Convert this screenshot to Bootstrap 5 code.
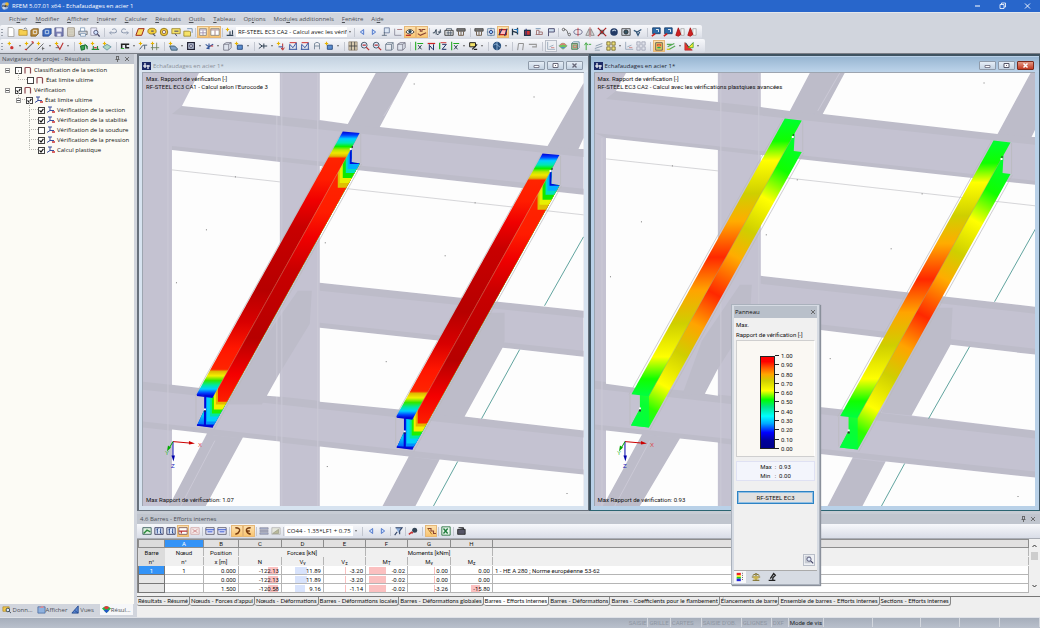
<!DOCTYPE html>
<html lang="fr">
<head>
<meta charset="utf-8">
<meta name="viewport" content="width=device-width, initial-scale=1">
<title>RFEM 5.07.01 x64 - Echafaudages en acier 1</title>
<link href="https://cdn.jsdelivr.net/npm/bootstrap@5.3.0/dist/css/bootstrap.min.css" rel="stylesheet">
<style>
  :root { --ui: "Open Sans", "Noto Sans", sans-serif; --grid: Roboto, "Liberation Sans", sans-serif; }
  body { font: 6px/8px var(--ui); color: #222; background: #d1d5dd; height: 100vh; }
  button, input, select { font: inherit; color: inherit; border: 0; padding: 0; background: none; }
  a, a:hover { color: inherit; text-decoration: none; }
  svg { display: block; }
  .titlebar { height: 12px; background: #2866cb; color: #fff; }
  .winctl { width: 25px; height: 12px; }
  .menubar { height: 13px; border-top: 1px solid #e4e7ec; color: #4c4f55; padding-left: 5px; }
  .menubar a { padding: 0 4px; }
  .toolrow { height: 14px; width: max-content; border-radius: 2px; background: linear-gradient(#f7f8fb, #dfe2ea 80%, #d3d7e0); padding-right: 4px; }
  .grip { width: 5px; height: 9px; background: radial-gradient(circle at 50% 50%, #9aa0aa 30%, transparent 40%) 1px 0/2px 3px repeat-y; }
  .ic { width: 12px; height: 12px; flex: none; }
  .ic svg { width: 10px; height: 10px; margin: auto; }
  .ic.on { background: linear-gradient(#fde3b4, #f9c26a); box-shadow: inset 0 0 0 1px #e6b878; }
  .ic.pressed { background: #eef0f4; box-shadow: inset 0 0 0 1px #b9bec8; }
  .dd { width: 6px; height: 12px; flex: none; }
  .dd::after { content: ""; display: block; width: 0; margin: auto; border: 2px solid transparent; border-top-color: #666; border-bottom: 0; border-left-width: 1px; border-right-width: 1px; }
  .gap-a { width: 3px; flex: none; } .gap-b { width: 6px; flex: none; }
  .gap-a::after, .gap-b::after { content: ""; display: block; width: 1px; height: 9px; margin: auto; background: #c3c7d0; }
  .combo { height: 10px; background: #fff; color: #111; padding-left: 2px; appearance: none; overflow: hidden; }
  .workspace { min-height: 0; border-top: 1px solid #7b7f87; gap: 3px; }
  .navi { width: 134px; flex: none; }
  .panehead { height: 10px; background: #c0c5ce; color: #4a4e55; padding: 0 3px; }
  .navi .panehead { padding-left: 2px; }
  .tree { background: #fcfbf5; padding: 1px 0 0 5px; color: #111; }
  .tree ul { list-style: none; margin: 0; padding: 0 0 0 11px; }
  .tree > ul { padding: 0; }
  .tree li { position: relative; }
  .tree label { height: 10px; position: relative; }
  .tree label.leaf { padding-left: 11px; }
  .tree li li::before { content: ""; position: absolute; left: 2px; top: -5px; width: 9px; height: 10px; border: dotted #b6b6b0; border-width: 0 0 1px 1px; }
  .tree .exp { width: 5px; height: 5px; border: 1px solid #9a9a9a; background: #fff linear-gradient(#555, #555) center/3px 1px no-repeat; margin-right: 5px; }
  .tree input { appearance: none; width: 7px; height: 7px; border: 1px solid #444; background: #fff; margin: 0 1px 0 0; flex: none; }
  .tree input:checked { background: #fff url("data:image/svg+xml,%3Csvg xmlns='http://www.w3.org/2000/svg' viewBox='0 0 5 5'%3E%3Cpath d='M.6 2.3 2 4 4.4.8' fill='none' stroke='%23111' stroke-width='1.1'/%3E%3C/svg%3E") center/5px 5px no-repeat; }
  .tree svg { width: 9px; height: 8px; margin-right: 2px; flex: none; }
  .navtabs { height: 13px; color: #4a4e55; }
  .navtabs a { padding: 0 2px; height: 11px; }
  .navtabs a.cur { background: #f6f7f9; }
  .navtabs svg { width: 9px; height: 9px; }
  .mdi { min-height: 0; min-width: 0; background: #c7ccd4; }
  .docs { min-height: 0; }
  .doc { border: 1px solid #68717c; border-width: 2px 1px 1px 2px; background: #d7e3f0; padding: 1px 4px 4px 3px; min-width: 0; }
  .doc.act { background: #b9d1e8; border-color: #3f5361; border-bottom-color: #2b6572; }
  .dochead { height: 15px; color: #8a8f97; background: linear-gradient(#c3d2e0, #dde7f1); margin: 0 -4px 0 -3px; padding: 2px 5px 0 3px; }
  .act .dochead { color: #1d2530; background: linear-gradient(#98b6d2, #bdd4ea); }
  .dochead > svg { margin-right: 2px; }
  .wb { width: 17px; height: 9px; border: 1px solid #8f9baa; border-radius: 1px; background: linear-gradient(#e6eef6, #c3d2e2); margin-left: 2px; }
  .wb svg { width: 7px; height: 7px; margin: auto; }
  .act .wb.red { background: linear-gradient(#e39a86, #c23a22); border-color: #7d2a1c; }
  .view { position: relative; background: #fdfdfd; border: 1px solid #9da5b0; border-width: 1px 0 0 1px; overflow: hidden; min-height: 0; font: 6px/8px var(--grid); color: #111; }
  .view > svg { position: absolute; inset: 0; width: 100%; height: 100%; }
  .cap { position: absolute; left: 3px; top: 2px; } .foot { position: absolute; left: 3px; bottom: 2px; }
  .tables { border-top: 3px solid #c7ccd4; background: #efefef; padding-bottom: 9px; }
  .tabletools { height: 15px; background: linear-gradient(#f7f8fb, #d9dde7); padding-left: 4px; border-bottom: 1px solid #a8acb4; }
  .gridwrap { border-left: 1px solid #888; min-width: 0; }
  .grid { table-layout: fixed; width: 100%; border-collapse: collapse; font: 6px/7px var(--grid); color: #111; background: #fff; }
  .grid th, .grid td { padding: 0 2px; border: 1px solid #b5b5b5; white-space: nowrap; overflow: hidden; font-weight: 400; height: 9px; line-height: 7px; }
  .grid thead th { background: #f0f0f0; text-align: center; border-top-color: #f0f0f0; border-bottom-color: #f0f0f0; }
  .grid thead tr.lt th { background: #e2e1e1; border: 1px solid #8d8d8d; height: 8px; }
  .grid thead tr.lt th.sel, .grid tbody th.sel { background: #3393f7; color: #fff; }
  .grid thead th.bn { background: #dcdcdc !important; border-color: #dcdcdc; }
  .grid tbody th { background: #e6e6e6; text-align: center; border-color: #777; }
  .grid tbody td { text-align: right; }
  .grid sub { font-size: 5px; bottom: -1px; line-height: 1px; }
  .b-r, .b-b { background: linear-gradient(var(--c), var(--c)) no-repeat; background-size: var(--w) 7px; background-position: var(--x) 1px; }
  .b-r { --c: #fbc0c0; } .b-b { --c: #d8e3fc; }
  .vscroll { width: 11px; background: #f0f0f0; flex: none; }
  .sheets { font: 6px/8px Lato, var(--grid); color: #111; border-top: 1px solid #777; margin-top: 3px; height: 12px; }
  .sheets a { height: 9px; padding: 0 1px; border: 1px solid #888; border-width: 0 1px 1px 0; border-radius: 0 0 3px 2px; background: #eaeaea; white-space: nowrap; }
  .sheets a.cur { background: #fff; }
  .status { height: 11px; background: linear-gradient(#a6aebb, #b9c0cc); border-top: 1px solid #dfe2e8; color: #8e96a2; font: 6px/9px var(--grid); }
  .status span { border-right: 1px solid #d3d7de; padding: 0 1px; height: 9px; white-space: nowrap; }
  .float-panel { position: absolute; right: 220px; top: 304px; width: 89px; background: #d6dbe3; border: 1px solid #aab1bc; box-shadow: 1px 1px 1px #8a909b; padding: 1px 2px; color: #111; z-index: 5; font: 6px/8px var(--grid); }
  .float-panel .hd { height: 12px; background: #b9c0ca; padding: 0 1px; font-family: var(--ui); }
  .float-panel .bd { background: #f0f0f0; border-bottom: 1px solid #aaa; padding: 2px 2px 0; }
  .what { line-height: 10px; }
  .scale { height: 117px; background: #faf8f3; border: 1px solid #cfcfcf; border-right-color: #fff; padding-top: 10px; }
  .ramp { width: 15px; height: 93px; margin: 5px 0 0 23px; border: 1px solid #222; background: linear-gradient(#f00 5%, #ff5a00 12%, #ffa500 19%, #cfcf00 26%, #ff0 37%, #0f0 47%, #00e68a 55%, #0ff 65%, #0af 73%, #00f 83%, #00009a 92%, #00008b); }
  .marks { height: 102px; }
  .marks span { line-height: 9px; padding-left: 6px; background: linear-gradient(#222, #222) 0 50%/4px 1px no-repeat; }
  .minmax { background: #f3f5fc; border: 1px solid #dfe1f3; height: 20px; margin-top: 4px; white-space: pre; line-height: 9px; }
  .modbtn { height: 13px; background: #e1e1e1; border: 1px solid #2e83c4; outline: 1px solid #8fbfe4; outline-offset: -2px; margin: 10px 1px 50px; }
</style>
</head>
<body class="d-flex flex-column overflow-hidden position-relative">

<header class="flex-shrink-0">
  <div class="titlebar d-flex align-items-center">
    <svg width="12" height="10" viewBox="0 0 12 10"><circle cx="5" cy="5" r="3.4" fill="#9fb4d8"/><path d="M3 8 8 2M2 5h6" stroke="#333" stroke-width="1.2"/><circle cx="7" cy="3" r="1.8" fill="#e9b93a"/><circle cx="4" cy="7" r="1.5" fill="#c7d4e8"/></svg>
    <span class="flex-grow-1">RFEM 5.07.01 x64 - Echafaudages en acier 1</span>
    <button class="winctl" aria-label="Réduire"><svg width="25" height="12" viewBox="0 0 25 12"><path d="M10 6h5" stroke="#fff"/></svg></button>
    <button class="winctl" aria-label="Restaurer"><svg width="25" height="12" viewBox="0 0 25 12"><path d="M10 4.500h4v4h-4zM11.500 4.500v-1.500h4v4h-1.500" stroke="#fff" stroke-width=".8" fill="none"/></svg></button>
    <button class="winctl" aria-label="Fermer"><svg width="25" height="12" viewBox="0 0 25 12"><path d="M10 3.500l5 5m0-5l-5 5" stroke="#fff" stroke-width=".9"/></svg></button>
  </div>
  <nav class="menubar d-flex align-items-center">
    <a href="#">Fic<u>h</u>ier</a><a href="#"><u>M</u>odifier</a><a href="#"><u>A</u>fficher</a><a href="#"><u>I</u>nsérer</a><a href="#"><u>C</u>alculer</a><a href="#"><u>R</u>ésultats</a><a href="#"><u>O</u>utils</a><a href="#"><u>T</u>ableau</a><a href="#">Op<u>t</u>ions</a><a href="#">Mod<u>u</u>les additionnels</a><a href="#"><u>F</u>enêtre</a><a href="#">Ai<u>d</u>e</a>
  </nav>
  <div class="toolrow d-flex align-items-center" id="bar1"></div>
  <div class="toolrow d-flex align-items-center" id="bar2"></div>
</header>

<main class="workspace flex-grow-1 d-flex">
  <aside class="navi d-flex flex-column">
    <div class="panehead d-flex align-items-center"><span class="flex-grow-1">Navigateur de projet - Résultats</span>
      <svg width="18" height="8" viewBox="0 0 18 8" fill="none" stroke="#555" stroke-width=".8"><path d="M3 1.500h3M3.500 1.500v3M5.500 1.500v3M2.500 4.500h4M4.500 4.500v2.500M12 2l4 4m0-4l-4 4"/></svg></div>
    <div class="tree flex-grow-1">
      <ul>
        <li><label class="d-flex align-items-center"><i class="exp"></i><input type="checkbox"><svg viewBox="0 0 9 8"><use href="#frame"/></svg>Classification de la section</label>
          <ul><li><label class="leaf d-flex align-items-center"><input type="checkbox"><svg viewBox="0 0 9 8"><use href="#frame"/></svg>État limite ultime</label></li></ul></li>
        <li><label class="d-flex align-items-center"><i class="exp"></i><input type="checkbox" checked><svg viewBox="0 0 9 8"><use href="#frame"/></svg>Vérification</label>
          <ul><li><label class="d-flex align-items-center"><i class="exp"></i><input type="checkbox" checked><svg viewBox="0 0 9 8"><use href="#prof"/></svg>État limite ultime</label>
            <ul>
              <li><label class="leaf d-flex align-items-center"><input type="checkbox" checked><svg viewBox="0 0 9 8"><use href="#prof"/></svg>Vérification de la section</label></li>
              <li><label class="leaf d-flex align-items-center"><input type="checkbox" checked><svg viewBox="0 0 9 8"><use href="#prof"/></svg>Vérification de la stabilité</label></li>
              <li><label class="leaf d-flex align-items-center"><input type="checkbox"><svg viewBox="0 0 9 8"><use href="#prof"/></svg>Vérification de la soudure</label></li>
              <li><label class="leaf d-flex align-items-center"><input type="checkbox" checked><svg viewBox="0 0 9 8"><use href="#prof"/></svg>Vérification de la pression</label></li>
              <li><label class="leaf d-flex align-items-center"><input type="checkbox" checked><svg viewBox="0 0 9 8"><use href="#prof"/></svg>Calcul plastique</label></li>
            </ul></li></ul></li>
      </ul>
    </div>
    <div class="navtabs d-flex align-items-start">
      <a href="#" class="d-flex align-items-center"><svg viewBox="0 0 10 10"><path d="M1 2h7v5H1z" fill="#f2c84b" stroke="#a87f1f" stroke-width=".7"/><circle cx="6.500" cy="5.500" r="2" fill="#dceafd" stroke="#345"/><path d="M8 7l2 2" stroke="#345"/></svg>&nbsp;Donn...</a>
      <a href="#" class="d-flex align-items-center"><svg viewBox="0 0 10 10"><path d="M1 2h8v7H1z" fill="#8fb2df" stroke="#44659a" stroke-width=".8"/><path d="M2 3l4-2 2 2z" fill="#e88"/></svg>Afficher</a>
      <a href="#" class="d-flex align-items-center"><svg viewBox="0 0 10 10"><path d="M1 9L8 1v8zM4 6l4 3" fill="#5b86cf" stroke="#234a91"/></svg>Vues</a>
      <a href="#" class="d-flex align-items-center cur ms-1"><svg viewBox="0 0 10 10"><path d="M0 4q5-6 10 0L5 9z" fill="#2bb24a"/><path d="M2 3q3-3 6 0L5 5z" fill="#e33"/><path d="M2 6l3-1 3 1-3 3z" fill="#2254c9"/></svg>Résul...</a>
    </div>
  </aside>

  <section class="mdi flex-grow-1 d-flex flex-column">
    <div class="docs flex-grow-1 d-flex">
      <div class="doc d-flex flex-column w-50">
        <div class="dochead d-flex align-items-center"><svg width="9" height="8" viewBox="0 0 9 8"><use href="#rf"/></svg><span class="flex-grow-1">Echafaudages en acier 1*</span>
          <button class="wb" aria-label="Réduire"><svg viewBox="0 0 7 7"><path d="M1 3.500h5v2H1z" fill="#fff" stroke="#667" stroke-width=".8"/></svg></button><button class="wb" aria-label="Agrandir"><svg viewBox="0 0 7 7"><path d="M1 1.500h5v4H1z" fill="#fff" stroke="#667"/><path d="M3 3.500h1" stroke="#667"/></svg></button><button class="wb" aria-label="Fermer"><svg viewBox="0 0 7 7"><path d="M1.500 1.500l4 4m0-4l-4 4" stroke="#667" stroke-width="1.300"/></svg></button></div>
        <div class="view flex-grow-1">
          <svg viewBox="143 72 441 435" preserveAspectRatio="xMinYMin slice">
            <defs>
              <linearGradient id="fl1" gradientUnits="userSpaceOnUse" x1="0" y1="131" x2="0" y2="395">
                <stop offset="0" stop-color="#0008d8"/><stop offset=".012" stop-color="#0040ff"/><stop offset=".026" stop-color="#00d0ff"/><stop offset=".042" stop-color="#00e8b0"/><stop offset=".055" stop-color="#08f000"/><stop offset=".068" stop-color="#b8e800"/><stop offset=".08" stop-color="#f0e800"/><stop offset=".092" stop-color="#e0b800"/><stop offset=".1" stop-color="#ff2400"/><stop offset=".18" stop-color="#ff1c00"/><stop offset=".26" stop-color="#f00000"/><stop offset=".36" stop-color="#c80000"/><stop offset=".6" stop-color="#b60000"/><stop offset=".72" stop-color="#d80000"/><stop offset=".82" stop-color="#ff1600"/><stop offset=".9" stop-color="#ff2400"/><stop offset=".908" stop-color="#e0b800"/><stop offset=".925" stop-color="#f4f000"/><stop offset=".943" stop-color="#30e800"/><stop offset=".96" stop-color="#00e8a0"/><stop offset=".975" stop-color="#00d0ff"/><stop offset=".99" stop-color="#0040ff"/><stop offset="1" stop-color="#0008d8"/>
              </linearGradient>
              <linearGradient id="wb1" gradientUnits="userSpaceOnUse" x1="0" y1="180" x2="0" y2="405">
                <stop offset="0" stop-color="#ff2400"/><stop offset=".14" stop-color="#ff1c00"/><stop offset=".25" stop-color="#f00000"/><stop offset=".4" stop-color="#c80000"/><stop offset=".7" stop-color="#b60000"/><stop offset=".86" stop-color="#f40000"/><stop offset="1" stop-color="#ff2400"/>
              </linearGradient>
              <linearGradient id="toe" x2="0" y2="1"><stop offset="0" stop-color="#00e8a0"/><stop offset=".5" stop-color="#00d0f8"/><stop offset="1" stop-color="#0060ff"/></linearGradient>
              <clipPath id="webclip"><path d="M360 132L213 396H205V408L197 425 213 426.500 360 162.500 352 161V147z"/></clipPath>
              <g id="beamA">
                <path d="M342 131L195 395M362 163L214 429M196 394v30M361 133v29" stroke="#b9b9bd" stroke-width=".7" fill="none"/>
                <g clip-path="url(#webclip)">
                  <path d="M190 120h180v320H190z" fill="#0010d8"/>
                  <path d="M206 120h170v304H206z" fill="#0090ff"/><path d="M207 120h170v301H207z" fill="#00d0f8"/><path d="M210 120h170v296H210z" fill="#00e8a0"/><path d="M212 120h170v293H212z" fill="#20f000"/><path d="M214 120h170v289H214z" fill="#f4f000"/><path d="M216 120h170v284H216z" fill="#e6b400"/>
                  <path d="M218 120h170v281H218z" fill="url(#wb1)"/>
                  <path d="M338 120h40v67H338z" fill="#e0c000"/><path d="M340 120h40v62H340z" fill="#e8f000"/><path d="M343 120h40v57H343z" fill="#10e800"/><path d="M346 120h40v52H346z" fill="#00e0c0"/><path d="M348 120h40v48H348z" fill="#00b0ff"/><path d="M350 120h40v43H350z" fill="#0010d8"/>
                  <path d="M190 406h14v18h-14z" fill="url(#toe)"/>
                </g>
                <path d="M343 130.500L360 132 213 396.500 196.500 394z" fill="url(#fl1)"/>
                <path d="M353 145L352 161 360 162V132z" fill="#c4c2d1"/>
                <path d="M197 394.500L213 396.500M205 396v29M197 424.500L213 426.500" stroke="#0008d8" stroke-width="1.500" fill="none"/>
                <path d="M352 147L213 397" stroke="#d9a0a0" stroke-width=".5" opacity=".7"/>
                <path d="M204 408h2v2h-2zM350 147h2v2h-2z" fill="#fff"/><path d="M204 410h2v1h-2zM352 145h1v2h-1z" fill="#222"/>
              </g>
              <g id="axes" font-size="6" font-family="Liberation Sans, sans-serif">
                <path d="M173 441L190 442.500" stroke="#c00"/><path d="M189 440.500l6 2.500-6 1z" fill="#c00"/>
                <path d="M173 441v15" stroke="#00a"/><path d="M171.500 455h3.500l-1.500 6z" fill="#00a"/>
                <path d="M173 441l-4 7" stroke="#0a0"/><path d="M168 445l3 2-4 4z" fill="#0a0"/>
                <text x="198" y="446" fill="#d44">X</text><text x="171" y="467" fill="#22b">Z</text><text x="165" y="454" fill="#3b3">Y</text>
              </g>
            </defs>
            <path d="M143 72h441v435H143z" fill="#c4c2d1"/>
            <g fill="#bdbcc9">
              <path d="M182 105L584 148V156L172 113zM172 145L584 188V194L172 149zM320 282L584 310V317L320 290zM320 322L584 350V356L320 327zM143 381L584 429V437L143 389zM143 421L584 469V475L143 427z"/>
              <path d="M376 72H409L380 127 348 123zM584 82V137L579 148 548 145zM207 434L243 438 205 507H168zM432 413L480 312H505V340L503 347 465 417zM409 456L440 460 415 507H382zM270 330L298 290H312L310 323 280 372 262 404H226z"/>
            </g>
            <path d="M277 72v435M282 72v435M168 72v435M318 72v435M384 115L412 72M215 440L180 507" stroke="#cbc9d6" stroke-width="1" fill="none"/>
            <g fill="#fdfdfd">
              <path d="M199 72L182 105 280 115V72zM320 72H376L348 123 320 119zM409 72L380 126 548 145 584 82V72zM584 137L579 148H584z"/>
              <path d="M172 149L280 161V260L215 389 172 384zM280 372L267 395 280 396zM320 165L584 194V310L320 282zM320 327L450 341 410 410 320 401zM503 347L584 356V430L465 416z"/>
              <path d="M172 429L207 433 172 500zM243 437L280 441V507H205zM320 446L409 456 382 507H320zM440 459L584 474V507H415z"/>
            </g>
            <path d="M172 169L280 181M340 187L584 214" stroke="#c4c4c8" stroke-width=".7"/>
            <path d="M584 236L545 305M520 349L482 418M458 461L433 507" stroke="#4f9a94" stroke-width=".9"/>
            <path d="M206 229h1M176 282h1M325 242h1M414 83h1M534 96h1M386 361h1M445 255h1M327 466h1M567 493h1M235 176h1M475 202h1" stroke="#777"/>
            <use href="#beamA"/><use href="#beamA" x="200" y="22"/><use href="#axes"/>
          </svg>
          <div class="cap">Max. Rapport de vérification [-]<br>RF-STEEL EC3 CA1 - Calcul selon l'Eurocode 3</div>
          <div class="foot">Max Rapport de vérification: 1.07</div>
        </div>
      </div>
      <div class="doc act d-flex flex-column w-50">
        <div class="dochead d-flex align-items-center"><svg width="9" height="8" viewBox="0 0 9 8"><use href="#rf"/></svg><span class="flex-grow-1">Echafaudages en acier 1*</span>
          <button class="wb" aria-label="Réduire"><svg viewBox="0 0 7 7"><path d="M1 3.500h5v2H1z" fill="#fff" stroke="#667" stroke-width=".8"/></svg></button><button class="wb" aria-label="Agrandir"><svg viewBox="0 0 7 7"><path d="M1 1.500h5v4H1z" fill="#fff" stroke="#556"/><path d="M3 3.500h1" stroke="#667"/></svg></button><button class="wb red" aria-label="Fermer"><svg viewBox="0 0 7 7"><path d="M1.500 1.500l4 4m0-4l-4 4" stroke="#fff" stroke-width="1.500"/></svg></button></div>
        <div class="view flex-grow-1">
          <svg viewBox="593 72 441 435" preserveAspectRatio="xMinYMin slice">
            <defs>
              <linearGradient id="fl2" gradientUnits="userSpaceOnUse" x1="0" y1="118" x2="0" y2="395">
                <stop offset="0" stop-color="#00ff30"/><stop offset=".08" stop-color="#10ff00"/><stop offset=".15" stop-color="#ff0"/><stop offset=".27" stop-color="#cfcf00"/><stop offset=".37" stop-color="#ffac00"/><stop offset=".5" stop-color="#ff2800"/><stop offset=".62" stop-color="#ffa400"/><stop offset=".74" stop-color="#cfcf00"/><stop offset=".86" stop-color="#ff0"/><stop offset=".94" stop-color="#10ff00"/><stop offset="1" stop-color="#00ff40"/>
              </linearGradient>
              <linearGradient id="wb2" gradientUnits="userSpaceOnUse" x1="816" y1="151" x2="660" y2="440">
                <stop offset="0" stop-color="#00ff30"/><stop offset=".1" stop-color="#10ff00"/><stop offset=".2" stop-color="#ff0"/><stop offset=".31" stop-color="#cfcf00"/><stop offset=".4" stop-color="#ffac00"/><stop offset=".53" stop-color="#ff2800"/><stop offset=".64" stop-color="#ffa400"/><stop offset=".74" stop-color="#cfcf00"/><stop offset=".85" stop-color="#ff0"/><stop offset=".93" stop-color="#30ff00"/><stop offset="1" stop-color="#00ff40"/>
              </linearGradient>
              <g id="beamB">
                <path d="M781 118L627 394M802 152L648 429M628 394v30M801 120v31" stroke="#b9b9bd" stroke-width=".7" fill="none"/>
                <path d="M793 132L792 150 800 151 647 427 629 425 638 408V394z" fill="url(#wb2)"/>
                <path d="M638 394h9v33l-18-2 9-17z" fill="#00ff40" opacity=".8"/>
                <path d="M783 117.500L800 119.500 647 395.500 629.500 393.500z" fill="url(#fl2)"/>
                <path d="M792 134L647 395" stroke="#999" stroke-width=".5" opacity=".7"/>
                <path d="M637 407h2v2h-2zM790 135h2v2h-2z" fill="#fff"/><path d="M637 409h2v2h-2zM791 133h1v2h-1z" fill="#333"/>
              </g>
            </defs>
            <path d="M593 72h441v435H593z" fill="#c4c2d1"/>
            <g fill="#bdbcc9">
              <path d="M614 90L1034 136V144L604 98zM593 132L1034 180V185L604 137zM759 275L1034 306V313L759 283zM759 317L1034 348V354L759 323zM593 380L1034 430V438L593 388zM593 424L1034 471V477L593 429z"/>
              <path d="M808 72H843L821 114 788 110zM1029 72H1034V128L1030 136 996 133zM640 434L678 438 637 507H600zM880 412L925 307H951L949 345 910 415zM851 458L884 462 860 507H825zM700 340L738 284H750L748 318 716 368 703 393 680 395z"/>
            </g>
            <path d="M719 72v435M757 72v435M600 137v370M816 110L838 72M648 440L612 507" stroke="#cbc9d6" fill="none"/>
            <g fill="#fdfdfd">
              <path d="M624 72L614 90 716 101V72zM759 72H808L788 110 759 106zM843 72L821 113 996 133 1029 72zM1034 128L1030 136H1034z"/>
              <path d="M604 137L716 149V260L640 388 604 383zM716 368L703 393 716 395zM759 154L1034 184V306L759 275zM759 322L890 338 850 410 759 400zM949 344L1034 354V430L910 415z"/>
              <path d="M604 430L640 434 604 500zM678 438L716 442V507H637zM759 447L851 457 825 507H759zM884 461L1034 477V507H860z"/>
            </g>
            <path d="M604 158L716 170M785 177L1034 205" stroke="#c4c4c8" stroke-width=".7"/>
            <path d="M1034 228L993 301M968 346L927 418M903 463L879 507" stroke="#4f9a94" stroke-width=".9"/>
            <path d="M639 221h1M608 276h1M764 234h1M982 82h1M889 248h1M828 358h1M1016 496h1M670 165h1M795 179h1M920 193h1" stroke="#777"/>
            <use href="#beamB"/><use href="#beamB" x="209" y="22"/><use href="#axes" x="450"/>
          </svg>
          <div class="cap">Max. Rapport de vérification [-]<br>RF-STEEL EC3 CA2 - Calcul avec les vérifications plastqiues avancées</div>
          <div class="foot">Max Rapport de vérification: 0.93</div>
        </div>
      </div>
    </div>

    <div class="tables flex-shrink-0 d-flex flex-column">
      <div class="panehead d-flex align-items-center"><span class="flex-grow-1">4.6 Barres - Efforts internes</span>
        <svg width="18" height="8" viewBox="0 0 18 8" fill="none" stroke="#555" stroke-width=".8"><path d="M3 1.500h3M3.500 1.500v3M5.500 1.500v3M2.500 4.500h4M4.500 4.500v2.500M12 2l4 4m0-4l-4 4"/></svg></div>
      <div class="tabletools d-flex align-items-center" id="bar3"></div>
      <div class="d-flex">
        <div class="gridwrap flex-grow-1">
          <table class="grid">
            <colgroup><col style="width:26px"><col style="width:39px"><col style="width:35px"><col style="width:43px"><col style="width:42px"><col style="width:42px"><col style="width:42px"><col style="width:43px"><col style="width:42px"><col></colgroup>
            <thead>
              <tr class="lt"><th class="bn"></th><th class="sel">A</th><th>B</th><th>C</th><th>D</th><th>E</th><th>F</th><th>G</th><th>H</th><th></th></tr>
              <tr><th class="bn">Barre</th><th>Nœud</th><th>Position</th><th colspan="3">Forces [kN]</th><th colspan="3">Moments [kNm]</th><th></th></tr>
              <tr><th class="bn">n°</th><th>n°</th><th>x [m]</th><th>N</th><th>V<sub>y</sub></th><th>V<sub>z</sub></th><th>M<sub>T</sub></th><th>M<sub>y</sub></th><th>M<sub>z</sub></th><th></th></tr>
            </thead>
            <tbody>
              <tr><th class="sel">1</th><td class="text-center">1</td><td>0.000</td><td class="b-r" style="--w:10px;--x:29px">-122.13</td><td class="b-b" style="--w:12px;--x:13px">11.89</td><td class="b-r" style="--w:1px;--x:21px">-3.20</td><td class="b-r" style="--w:17px;--x:3px">-0.02</td><td class="b-r" style="--w:1px;--x:26px">0.00</td><td>0.00</td><td class="text-start">1 - HE A 280 ; Norme européenne 53-62</td></tr>
              <tr><th></th><td></td><td>0.000</td><td class="b-r" style="--w:10px;--x:29px">-122.13</td><td class="b-b" style="--w:12px;--x:13px">11.89</td><td class="b-r" style="--w:1px;--x:21px">-3.20</td><td class="b-r" style="--w:17px;--x:3px">-0.02</td><td class="b-r" style="--w:1px;--x:26px">0.00</td><td>0.00</td><td></td></tr>
              <tr><th></th><td></td><td>1.500</td><td class="b-r" style="--w:10px;--x:29px">-120.58</td><td class="b-b" style="--w:10px;--x:13px">9.16</td><td class="b-r" style="--w:1px;--x:21px">-1.14</td><td class="b-r" style="--w:17px;--x:3px">-0.02</td><td class="b-r" style="--w:1px;--x:26px">-3.26</td><td class="b-r" style="--w:9px;--x:20px">-15.80</td><td></td></tr>
            </tbody>
          </table>
        </div>
        <div class="vscroll d-flex flex-column justify-content-between align-items-center py-1">
          <svg width="7" height="17" viewBox="0 0 7 17"><path d="M1.500 4l2-2 2 2" fill="none" stroke="#333"/><path d="M0 9h7v8H0z" fill="#cdcdcd"/></svg>
          <svg width="7" height="6" viewBox="0 0 7 6"><path d="M1.500 2l2 2 2-2" fill="none" stroke="#333"/></svg>
        </div>
      </div>
      <nav class="sheets d-flex align-items-start">
        <a href="#">Résultats - Résumé</a><a href="#">Nœuds - Forces d'appui</a><a href="#">Nœuds - Déformations</a><a href="#">Barres - Déformations locales</a><a href="#">Barres - Déformations globales</a><a href="#" class="cur">Barres - Efforts internes</a><a href="#">Barres - Déformations</a><a href="#">Barres - Coefficients pour le flambement</a><a href="#">Élancements de barre</a><a href="#">Ensemble de barres - Efforts internes</a><a href="#">Sections - Efforts internes</a>
      </nav>
    </div>
  </section>
</main>

<footer class="status d-flex justify-content-end flex-shrink-0">
  <span>SAISIE</span><span>GRILLE</span><span style="width:31px">CARTES</span><span style="width:40px">SAISIE D'OB.</span><span style="width:30px">GLIGNES</span><span style="width:17px">DXF</span><span class="text-dark">Mode de vis</span><span style="width:49px"></span><span style="width:48px"></span><span style="width:39px"></span><span style="width:40px"></span><span style="width:40px"></span>
</footer>

<div class="float-panel d-flex flex-column">
  <div class="hd d-flex align-items-center"><span class="flex-grow-1">Panneau</span><svg width="6" height="6" viewBox="0 0 6 6"><path d="M1 1l4 4m0-4l-4 4" stroke="#555" stroke-width=".8"/></svg></div>
  <div class="bd d-flex flex-column">
    <div class="what">Max.</div><div class="what text-nowrap">Rapport de vérification [-]</div>
    <div class="scale d-flex">
      <div class="ramp"></div>
      <div class="marks d-flex flex-column justify-content-between"><span>1.00</span><span>0.90</span><span>0.80</span><span>0.70</span><span>0.60</span><span>0.50</span><span>0.40</span><span>0.30</span><span>0.20</span><span>0.10</span><span>0.00</span></div>
    </div>
    <div class="minmax text-center">Max  :  0.93
Min   :  0.00</div>
    <button class="modbtn">RF-STEEL EC3</button>
    <button class="ic pressed ms-auto mb-1" aria-label="Options"><svg viewBox="0 0 12 12"><path d="M1 1h7v9H1z" fill="#c8ccd4"/><circle cx="6" cy="5" r="2.500" fill="#e4edfb" stroke="#446"/><path d="M8 7l3 3" stroke="#446" stroke-width="1.500"/></svg></button>
  </div>
  <div class="d-flex align-items-center">
    <button class="ic bg-light" aria-label="Couleurs"><svg viewBox="0 0 12 12"><path d="M2 1h5v3H2z" fill="#e22"/><path d="M2 4h5v2H2z" fill="#ee2"/><path d="M2 6h5v2H2z" fill="#2c2"/><path d="M2 8h5v3H2z" fill="#22d"/><path d="M9 1v10" stroke="#333" stroke-dasharray="1 1.500"/></svg></button>
    <button class="ic mx-1" aria-label="Facteurs"><svg viewBox="0 0 12 12"><path d="M2 4l4-2 4 2M1 6h4M7 6h4M2 10h8M6 2v8" stroke="#7a6a20" stroke-width="1.200" fill="none"/><path d="M3 5h6v4H3z" fill="#d9bb3a" opacity=".7"/></svg></button>
    <button class="ic" aria-label="Filtre"><svg viewBox="0 0 12 12"><path d="M2 10h8M4 8l4-6 2 2-3 3v3" stroke="#222" stroke-width="1.600" fill="none"/></svg></button>
  </div>
</div>

<svg width="0" height="0" class="position-absolute">
  <symbol id="frame" viewBox="0 0 9 8"><path d="M2 7.500V2.500Q2 1.500 3 1.500H6.500Q7.500 1.500 7.500 2.500V7.500" fill="none" stroke="#8d4a52" stroke-width="1.200"/></symbol>
  <symbol id="prof" viewBox="0 0 9 8"><path d="M2 1h4M4 1v4M1 6.500l3-2h4" fill="none" stroke="#3a4f9e"/><path d="M6 6h3" stroke="#c33" stroke-width="1.500"/></symbol>
  <symbol id="rf" viewBox="0 0 9 8"><path d="M0 0h9v8H0z" fill="#1d2a66"/><path d="M1 4h7M3 1v5M6 3v4" stroke="#fff" stroke-width="1.200"/></symbol>
</svg>

<script src="https://cdn.jsdelivr.net/npm/bootstrap@5.3.0/dist/js/bootstrap.bundle.min.js"></script>
<script>
  // Toolbar glyphs on a 12 x 12 grid.
  const p = (d, s, w = 1.2, f = 'none') => `<path d="${d}" stroke="${s}" stroke-width="${w}" fill="${f}"/>`;
  const star = (x, y) => `<path d="M${x - 2} ${y}h4M${x} ${y - 2}v4" stroke="#e8b400" stroke-width="1.400"/>`;
  const G = {
    page: p('M2.500 .5h5l2 2v9h-7z', '#888', .8, '#fff'),
    open: p('M1 10V3h4l1 1h5v6z', '#a77b14', .8, '#f6cf52') + p('M7 2q2-2 4 1', '#567', 1),
    cube1: p('M1 4l3-2h6v6l-3 3H1z', '#6b4a10', .8, '#b98a3a') + p('M4 4h4v4H4z', '#eee', 1),
    cube2: p('M1 4l3-2h7v6l-3 3H1z', '#1d3a80', .8, '#3e6cc0') + p('M4 4h4v4H4z', '#cde', 1),
    save: p('M1 1h10v10H1z', '#4d5180', .8, '#7a7fb5') + p('M3 1.500h6v4H3zM4 8h4v3H4z', '#ddd', .5, '#eef'),
    list: p('M2 1h8v10H2z', '#776c5a', .8, '#ece6d6') + p('M3 3.500h6M3 6h6M3 8.500h6', '#998', .8),
    print: p('M1 5h10v4H1z', '#555', .8, '#cfd3da') + p('M3 1h5v4H3zM3 8h6v3H3z', '#68a', .8, '#fff'),
    preview: p('M1 1h7v9H1z', '#889', .8, '#eef') + '<circle cx="7" cy="6.500" r="2.500" fill="#cfe2ff" stroke="#446"/>' + p('M9 8.500l2.500 3', '#446', 1.5),
    undo: p('M2 7h6q3 0 2-3t-5-1', '#8b97ad', 1.2) + p('M4 5l-2 2 2 2', '#8b97ad', 1),
    redo: p('M10 7H4q-3 0-2-3t5-1', '#8b97ad', 1.2) + p('M8 5l2 2-2 2', '#8b97ad', 1),
    para: p('M4 2h7L8 10H1z', '#a02a1a', 1.2, '#f7d860'),
    lens: '<ellipse cx="6" cy="5" rx="5" ry="3.500" fill="#f4cf3c" stroke="#957a1a"/>' + p('M5 5h3M7 8l3 3', '#556', 1.4),
    gear: '<circle cx="6" cy="6" r="4.500" fill="#f0c93c" stroke="#8a6b10"/><circle cx="6" cy="6" r="2" fill="#eee" stroke="#865"/>',
    note: p('M1 2h10v6H1z', '#927a1c', .9, '#f6e36a') + p('M4 5h5M5 8l2 3', '#446', 1.2),
    folder2: p('M1 5h8v6H1z', '#927a1c', .9, '#f6e36a') + p('M5 2h6v5', '#68a', 1, '#eef'),
    win: p('M2 2h8v8H2z', '#777', .9, '#fff') + p('M2 3.500h8M6 4v6M2 7h8', '#98a', 1),
    win2: p('M1 2h10v8H1z', '#777', .9, '#fff') + p('M1 3.500h10M6 4v6', '#a88', 1.2),
    disp: star(3, 3) + p('M2 10h8M6 5v5M9 4v5', '#345', 1.3),
    left: p('M8 3L4 6l4 3z', '#3c67c4', 1, '#c9dcfa'), right: p('M4 3l4 3-4 3z', '#3c67c4', 1, '#c9dcfa'),
    doc: p('M4 1h6v6H4z', '#679', 1, '#dde8f5') + p('M1 10h6M4 6v4', '#567', 1),
    xxx: p('M2 2v8h8', '#889', 1) + p('M5 3h6', '#a66', 1, 'none'),
    eye: p('M1 6q5-6 10 0-5 5-10 0z', '#333', 1, '#fff') + '<circle cx="6" cy="5.500" r="2" fill="#245"/>' + p('M1 10h6', '#b22', 1.4),
    num: p('M1 8l3 2 7-3M2 3h2v2h2V3h4', '#843', 1.3),
    chk: p('M1 7h2l2-4v6M6 9q4 0 4-6M7 6h4', '#345', 1.2),
    calc: p('M1 4h10v6H1z', '#333', 1, '#ddd') + p('M3 4V2h6v2M3 7h7M5 5v5M8 5v5', '#456', .9),
    table: p('M1 2h10v3H1z', '#444', 1, '#777') + p('M3 5v5h6V5M6 5v5', '#765', 1.2),
    sun: '<circle cx="6" cy="6" r="2" fill="#9cf" stroke="#237"/>' + p('M6 1v2M6 9v2M1 6h2M9 6h2M2 2h8v8H2z', '#579', .9),
    fr: p('M2 3h8v6H2z', '#b22', 1.5, '#fbb') + p('M1 10l4-8M8 11l3-9', '#236', 1.3),
    cut: p('M3 2v8M9 1v8M3 5l6 2', '#234', 1.6) + p('M5 3h4v4', '#27b', 1.3),
    cutr: p('M3 4h7v6H3z', '#234', 1.3, '#c33') + p('M5 2v8', '#237', 1.3),
    dist: p('M2 9h8M3 9V4h3v5M6 6h4v3', '#966', 1) + p('M2 2h6', '#68a', 1),
    flag: p('M3 11V2h7v4H3', '#557', 1.2, '#cde'),
    curve: '<circle cx="3" cy="3" r="1.500" fill="none" stroke="#555"/><circle cx="10" cy="9" r="1.500" fill="none" stroke="#555"/>' + p('M4 3q4 0 4 5', '#555', 1),
    rot: '<ellipse cx="6" cy="6" rx="5" ry="3" fill="none" stroke="#668"/>' + p('M6 1v10', '#c33', 1, 'none'),
    mir: p('M5 2v8H1zM7 2v8h4z', '#777', .9, '#ddd') + p('M6 0v12', '#c55', .8),
    cross: p('M1 1l10 10M11 1L1 11', '#a22', 1.5) + p('M4 4h4v4H4z', '#333', .8),
    ball: '<circle cx="6" cy="6" r="4.500" fill="#223a66"/>' + p('M4 5q3-3 4 0', '#cde', 1.3),
    cam: p('M1 2h10v8H1z', '#444', 1, '#cfd6e0') + '<circle cx="6" cy="6" r="2.500" fill="#356" stroke="#222"/>',
    bird: p('M1 4l4 2 5-3M4 6l2 4 2-4', '#357', 1.5),
    mod1: p('M2 1h9v7H2z', '#123a66', 1, '#2d6ba8') + p('M1 11l4-3', '#c22', 2) + p('M6 3h3v3', '#fff', 1),
    mod2: p('M7 2h4v8H7z', '#999', .8, '#f5f5f5') + p('M4 1l3 8-3 2-3-1z', '#a11', 1, '#c22'),
    dot: star(4, 3) + '<circle cx="7" cy="8" r="2" fill="#c33"/>',
    line: star(3, 3) + p('M2 11L11 2', '#666', 1.3) + p('M9 1h2v2M1 10h2v1', '#c22', 1.2),
    prc: star(3, 3) + p('M2 10L9 3M7 9h3M8 7v4', '#666', 1.1),
    mem: star(3, 3) + p('M4 5l3 5 4-8', '#b33', 1.3) + p('M2 8h4', '#555', 1),
    grn: star(3, 3) + p('M3 6l5-1v5l-4 1zM8 4l3 2v4', '#156b2c', 1.2, '#3aa552'),
    node: star(3, 3) + p('M2 10h9M4 6v4M9 6v4', '#2a8a3a', 1.3) + p('M5 8h3', '#c33', 1.4),
    slab: star(3, 3) + p('M1 7l5-3 5 3-5 4z', '#589', .9, '#aed7c4'),
    sup: p('M1 4h10M2 4v5M7 4v4h4', '#222', 1.8) + p('M1 9h4', '#3a3', 1.2),
    hinge: star(3, 3) + p('M2 10l4-5h5M8 5v5', '#567', 1.2),
    mesh: star(3, 3) + p('M3 4v7M8 2v9M1 8h10', '#6a7f5a', 1),
    surf: star(3, 3) + p('M2 6h6l3 3v2H4z', '#356', 1, '#7fa0c8'),
    hole: p('M2 2h8v8H2z', '#223', 1.5, '#c9d4e8') + p('M4.500 4.500h3v3h-3z', '#335', 1, '#fff'),
    plane: p('M2 4l4 3 5-3M6 3v7M3 9l4-2', '#359', 1.3) + p('M8 6h3', '#c33', 1.2),
    solid: p('M2 4l3-2h6v6l-3 3H2z', '#667', .9, '#dfe4ee') + p('M2 4h6v7M8 4l3-2', '#667', .8),
    opt: star(3, 3) + p('M4 5h6v5H4z', '#247', 1, '#5a8ccf'),
    load: p('M1 3l4 3-4 3M5 6h6M7 3v6', '#345', 1.2),
    ld2: star(3, 3) + p('M8 3v7M6 8l2 3 2-3', '#b33', 1.2) + p('M3 7h5', '#35a', 1.2),
    ld3: p('M2 10V4l4 4 4-6v8M1 10h10', '#2a4b9a', 1.1) + p('M2 2h8', '#c33', 1.2),
    ld4: p('M3 10V3q3-3 6 0v7M3 6h6', '#789', 1.1),
    wire: p('M1 1h10v10H1z', '#876', .8, '#d8cbb0') + p('M4 11V1M8 11V1M1 6h10', '#444', 1),
    zoomi: '<circle cx="5" cy="5" r="3.500" fill="#dceafd" stroke="#345"/>' + p('M7.500 7.500l3.500 3.500M3 5h4', '#b33', 1.4),
    box: p('M2 4l2-2h7v7l-2 2H2zM2 4h7v7M9 4l2-2', '#678', 1, 'none'),
    ax: p('M2 1v10M4 3h7', '#2a2', 1.3) + p('M5 10l4-5M5 5l4 5', '#345', 1.2),
    ay: p('M2 3h9', '#c22', 1.5) + p('M4 4v7M9 4v7M5 6l3 4', '#236', 1.2),
    az: p('M2 2v8', '#2a2', 1.5) + p('M5 4h5l-5 6h5', '#236', 1.2) + p('M3 2h7', '#c22', 1),
    edit: p('M2 2h7v5H2z', '#222', 1.2, '#f3e26a') + p('M5 10L11 4M7 10h4', '#222', 1.4),
    globe: '<circle cx="6" cy="6" r="5" fill="#29517d"/>' + p('M2 5q3-3 5 0t3 2M6 1v10', '#9bd', 1),
    gate: p('M2 11l1-8h6l-1 8', '#888', 1.1), hv: p('M1 4h9v3H5', '#999', 1.3),
    res: p('M2 1v9h9M4 7l5-2', '#9ab', 1.1) + p('M6 8h4', '#c77', 1),
    rain: p('M1 6q5-7 10 0l-5 4z', '#787', .6, '#6fc45c') + p('M3 5q3-3 6 0', '#e77', 1.5) + p('M4 8h4', '#48d', 1.3),
    rcube: p('M2 3h7v7H2z', '#575', 1, '#8fd09a') + p('M4 5h4v3H4z', '#d66', 1) + p('M2 3l2-2h7v7l-2 2', '#589', 1),
    arr: p('M5 11V3M3 5l2-3 2 3M8 4h3', '#4a4', 1.2), bars: p('M1 9l9-3M2 6l8-3M1 11h6', '#89a', 1.1),
    quad: p('M1 1h4v4H1zM7 1h4v4H7zM1 7h4v4H1zM7 7h4v4H7z', '#665a20', .9, '#efe27a'),
    quadg: p('M1 1h4v4H1zM7 1h4v4H7zM1 7h4v4H1zM7 7h4v4H7z', '#9a9fb0', .9, '#dfe2ea'),
    rgb: p('M2 2h8v9H2z', '#555', 1, '#e8d060') + p('M4 4h4v2H4z', '#d33', 1) + p('M4 8h4', '#2a5', 1.6),
    lay: p('M1 4h6M2 7l8-4M4 10l7-4', '#5a5', 1.4) + p('M1 10h4', '#cc2', 1.6),
    diag: p('M1 2v9h9z', '#a33', .8, '#e8322a') + p('M2 2l4 6 5-6', '#333', 1) + p('M5 8l6-6v6z', '#4a3', 1, '#ffe92e'),
    g1: p('M1 2h10v8H1z', '#355', 1, '#dff0e0') + p('M2 9l4-4 4 2', '#2a8a3a', 1.6), g2: p('M1 2h10v8H1z', '#335', 1, '#dde6f8') + p('M4 3v6M8 3v6M3 5l2-2M7 7l2 2', '#23468c', 1.1),
    gr: p('M1 2h10v8H1z', '#755', 1, '#fff') + p('M1 6h10M4 7v2', '#b33', 1.5), gx: p('M1 2h10v8H1z', '#c99', .8, '#f5e9e9') + p('M3 4l6 4M9 4L3 8', '#c88', 1),
    gd: p('M1 2h10v8H1z', '#556', 1, '#eef') + p('M1 4.500h10M3 7h6', '#35c', 1.2), hook: p('M4 2q6 0 5 4-1 3-5 4', '#7a3d10', 1.8), hook2: p('M8 2q-6 0-5 4 1 3 5 4M3 6h4', '#7a3d10', 1.8), rows: p('M1 2h10v2H1zM1 5.500h10v1H1zM1 8h10v2H1z', '#778', .6, '#a8b0cc'),
    img: p('M1 2h10v8H1z', '#aaa', .8, '#e4e6dc') + p('M2 9l7-5v5z', '#998', .8, '#b9ba9a'),
    fun: p('M3 2h8L8 6v4', '#346', 1.3, '#8fb0dd') + p('M2 11l3-4', '#346', 1.3), step: p('M2 3h4v3h3v3h3', '#843', 1.3) + p('M2 3l5 7', '#a60', 1),
    pin: '<circle cx="8" cy="5" r="3" fill="#345"/>' + p('M1 10l4-3M3 8h3', '#c33', 1.8),
    xls: p('M1 1h10v10H1z', '#1c6b34', 1, '#e9f6ec') + p('M3 3l5 6M8 3L3 9', '#1c7a3a', 1.6), lib: p('M2 4h9v6H2zM3 2h6v2', '#222', 1, '#556'),
  };
  // "|" thin gap, "||" wide gap, "v" arrow, "*" suffix = switched on, "_" suffix = pressed
  const bars = {
    bar1: 'grip page open cube1 cube2 save list print preview || undo redo | para lens gear note folder2 | win* win2* | disp combo1 | left right doc xxx eye* num* | chk calc table || table sun fr* cut cutr dist flag | curve rot mir cross ball cam bird || mod1 mod1 mod2 mod2',
    bar2: 'grip dot v line prc v mem v || grn node slab || sup v hinge mesh || surf v hole v plane v solid opt v || load v ld2 ld3 ld3 ld4 opt v || wire zoomi zoomi box solid || ax ay az ax v edit v || globe v || gate hv || res_ rain rcube arr bars quad v res quadg || rgb* lay v diag v',
    bar3: 'g1 g2 g2 gr* gx | gd gd | hook* hook2* | rows img | combo2 || left right | fun | pin || step* | xls | lib'
  };
  const combo = (w, t) => `<select class="combo" style="width:${w}px" aria-label="Cas"><option>${t}</option></select><button class="dd" aria-label="Liste"></button>`;
  for (const id in bars) document.getElementById(id).innerHTML = bars[id].split(' ').map(k => {
    if (k === 'grip') return '<i class="grip"></i>';
    if (k === '|') return '<i class="gap-a"></i>';
    if (k === '||') return '<i class="gap-b"></i>';
    if (k === 'v') return '<button class="dd" aria-label="Plus"></button>';
    if (k === 'combo1') return combo(111, 'RF-STEEL EC3 CA2 - Calcul avec les vérif');
    if (k === 'combo2') return combo(68, 'CO44 - 1.35*LF1 + 0.75');
    const n = k.replace(/[*_]$/, ''), c = k.endsWith('*') ? ' on' : k.endsWith('_') ? ' pressed' : '';
    return `<button class="ic${c}" aria-label="${n}"><svg viewBox="0 0 12 12">${G[n]}</svg></button>`;
  }).join('');
</script>
</body>
</html>
